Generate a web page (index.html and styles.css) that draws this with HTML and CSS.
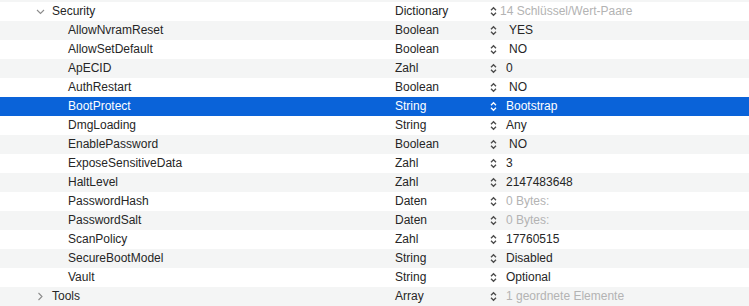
FILE: index.html
```html
<!DOCTYPE html>
<html>
<head>
<meta charset="utf-8">
<link rel="stylesheet" href="styles.css">
</head>
<body>
<div class="table">
  <div class="row top"></div>
  <div class="row">
    <div class="key lvl0"><svg class="chev" width="9" height="6" viewBox="0 0 9 6"><path d="M1 1l3.5 3.5L8 1" fill="none" stroke="#8c8c8c" stroke-width="1.1"/></svg>Security</div>
    <div class="type">Dictionary</div>
    <div class="val"><svg class="step" width="7" height="11" viewBox="0 0 7 11"><path d="M1 4.2l2.5-2.5L6 4.2M1 6.8l2.5 2.5L6 6.8" fill="none" stroke="currentColor" stroke-width="1.3"/></svg><span class="t dim dict">14 Schlüssel/Wert-Paare</span></div>
  </div>
  <div class="row">
    <div class="key">AllowNvramReset</div><div class="type">Boolean</div>
    <div class="val"><svg class="step" width="7" height="11" viewBox="0 0 7 11"><path d="M1 4.2l2.5-2.5L6 4.2M1 6.8l2.5 2.5L6 6.8" fill="none" stroke="currentColor" stroke-width="1.3"/></svg><span class="t bool">YES</span></div>
  </div>
  <div class="row">
    <div class="key">AllowSetDefault</div><div class="type">Boolean</div>
    <div class="val"><svg class="step" width="7" height="11" viewBox="0 0 7 11"><path d="M1 4.2l2.5-2.5L6 4.2M1 6.8l2.5 2.5L6 6.8" fill="none" stroke="currentColor" stroke-width="1.3"/></svg><span class="t bool">NO</span></div>
  </div>
  <div class="row">
    <div class="key">ApECID</div><div class="type">Zahl</div>
    <div class="val"><svg class="step" width="7" height="11" viewBox="0 0 7 11"><path d="M1 4.2l2.5-2.5L6 4.2M1 6.8l2.5 2.5L6 6.8" fill="none" stroke="currentColor" stroke-width="1.3"/></svg><span class="t">0</span></div>
  </div>
  <div class="row">
    <div class="key">AuthRestart</div><div class="type">Boolean</div>
    <div class="val"><svg class="step" width="7" height="11" viewBox="0 0 7 11"><path d="M1 4.2l2.5-2.5L6 4.2M1 6.8l2.5 2.5L6 6.8" fill="none" stroke="currentColor" stroke-width="1.3"/></svg><span class="t bool">NO</span></div>
  </div>
  <div class="row sel">
    <div class="key">BootProtect</div><div class="type">String</div>
    <div class="val"><svg class="step" width="7" height="11" viewBox="0 0 7 11"><path d="M1 4.2l2.5-2.5L6 4.2M1 6.8l2.5 2.5L6 6.8" fill="none" stroke="currentColor" stroke-width="1.3"/></svg><span class="t">Bootstrap</span></div>
  </div>
  <div class="row">
    <div class="key">DmgLoading</div><div class="type">String</div>
    <div class="val"><svg class="step" width="7" height="11" viewBox="0 0 7 11"><path d="M1 4.2l2.5-2.5L6 4.2M1 6.8l2.5 2.5L6 6.8" fill="none" stroke="currentColor" stroke-width="1.3"/></svg><span class="t">Any</span></div>
  </div>
  <div class="row">
    <div class="key">EnablePassword</div><div class="type">Boolean</div>
    <div class="val"><svg class="step" width="7" height="11" viewBox="0 0 7 11"><path d="M1 4.2l2.5-2.5L6 4.2M1 6.8l2.5 2.5L6 6.8" fill="none" stroke="currentColor" stroke-width="1.3"/></svg><span class="t bool">NO</span></div>
  </div>
  <div class="row">
    <div class="key">ExposeSensitiveData</div><div class="type">Zahl</div>
    <div class="val"><svg class="step" width="7" height="11" viewBox="0 0 7 11"><path d="M1 4.2l2.5-2.5L6 4.2M1 6.8l2.5 2.5L6 6.8" fill="none" stroke="currentColor" stroke-width="1.3"/></svg><span class="t">3</span></div>
  </div>
  <div class="row">
    <div class="key">HaltLevel</div><div class="type">Zahl</div>
    <div class="val"><svg class="step" width="7" height="11" viewBox="0 0 7 11"><path d="M1 4.2l2.5-2.5L6 4.2M1 6.8l2.5 2.5L6 6.8" fill="none" stroke="currentColor" stroke-width="1.3"/></svg><span class="t">2147483648</span></div>
  </div>
  <div class="row">
    <div class="key">PasswordHash</div><div class="type">Daten</div>
    <div class="val"><svg class="step" width="7" height="11" viewBox="0 0 7 11"><path d="M1 4.2l2.5-2.5L6 4.2M1 6.8l2.5 2.5L6 6.8" fill="none" stroke="currentColor" stroke-width="1.3"/></svg><span class="t dim">0 Bytes:</span></div>
  </div>
  <div class="row">
    <div class="key">PasswordSalt</div><div class="type">Daten</div>
    <div class="val"><svg class="step" width="7" height="11" viewBox="0 0 7 11"><path d="M1 4.2l2.5-2.5L6 4.2M1 6.8l2.5 2.5L6 6.8" fill="none" stroke="currentColor" stroke-width="1.3"/></svg><span class="t dim">0 Bytes:</span></div>
  </div>
  <div class="row">
    <div class="key">ScanPolicy</div><div class="type">Zahl</div>
    <div class="val"><svg class="step" width="7" height="11" viewBox="0 0 7 11"><path d="M1 4.2l2.5-2.5L6 4.2M1 6.8l2.5 2.5L6 6.8" fill="none" stroke="currentColor" stroke-width="1.3"/></svg><span class="t">17760515</span></div>
  </div>
  <div class="row">
    <div class="key">SecureBootModel</div><div class="type">String</div>
    <div class="val"><svg class="step" width="7" height="11" viewBox="0 0 7 11"><path d="M1 4.2l2.5-2.5L6 4.2M1 6.8l2.5 2.5L6 6.8" fill="none" stroke="currentColor" stroke-width="1.3"/></svg><span class="t">Disabled</span></div>
  </div>
  <div class="row">
    <div class="key">Vault</div><div class="type">String</div>
    <div class="val"><svg class="step" width="7" height="11" viewBox="0 0 7 11"><path d="M1 4.2l2.5-2.5L6 4.2M1 6.8l2.5 2.5L6 6.8" fill="none" stroke="currentColor" stroke-width="1.3"/></svg><span class="t">Optional</span></div>
  </div>
  <div class="row">
    <div class="key lvl0"><svg class="chev right" width="9" height="9" viewBox="0 0 9 9"><path d="M2.5 1l3.5 3.5L2.5 8" fill="none" stroke="#8c8c8c" stroke-width="1.1"/></svg>Tools</div>
    <div class="type">Array</div>
    <div class="val"><svg class="step" width="7" height="11" viewBox="0 0 7 11"><path d="M1 4.2l2.5-2.5L6 4.2M1 6.8l2.5 2.5L6 6.8" fill="none" stroke="currentColor" stroke-width="1.3"/></svg><span class="t dim">1 geordnete Elemente</span></div>
  </div>
</div>
</body>
</html>
```

FILE: styles.css
```css
html, body {
  margin: 0;
  padding: 0;
  background: #ffffff;
}
body {
  width: 749px;
  height: 306px;
  overflow: hidden;
  font-family: "Liberation Sans", Arial, sans-serif;
  font-size: 12px;
  color: #262626;
}
.table {
  display: flex;
  flex-direction: column;
}
.row {
  display: grid;
  grid-template-columns: 395px 95px 1fr;
  height: 19px;
  line-height: 19px;
  white-space: nowrap;
}
.row:nth-child(odd) {
  background: #f4f5f5;
}
.row.top {
  height: 2px;
}
.row.sel {
  background: #0a63d9;
  color: #ffffff;
}
.key {
  padding-left: 68px;
  display: flex;
  align-items: center;
}
.key.lvl0 {
  padding-left: 36px;
}
.chev {
  width: 9px;
  margin-right: 7px;
  flex: none;
}
.type {
  display: flex;
  align-items: center;
}
.val {
  display: flex;
  align-items: center;
  color: #262626;
}
.row.sel .val, .row.sel .step {
  color: #ffffff;
}
.step {
  margin-right: 9px;
  color: #4a4a4a;
  flex: none;
}
.t.bool {
  margin-left: 3px;
}
.t.dict {
  margin-left: -6px;
}
.t.dim {
  color: #b3b3b3;
}
```
